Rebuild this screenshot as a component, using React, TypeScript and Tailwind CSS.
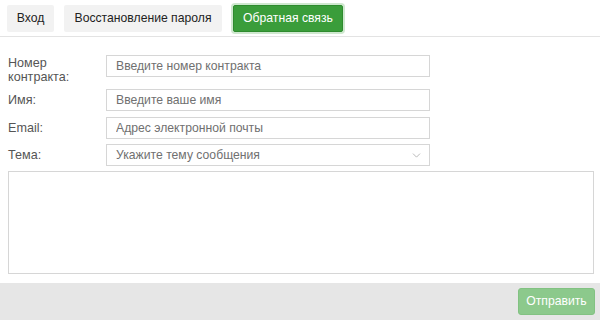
import { ChevronDown } from "lucide-react";

const font = { fontFamily: '"Liberation Sans", Arial, sans-serif' };

export default function App() {
  return (
    <div className="w-[600px] h-[320px] bg-white flex flex-col text-[12.2px] overflow-hidden" style={font}>
      {/* Tabs */}
      <div className="flex items-center h-[37px] pl-[7px] pt-[1px] border-b border-[#e3e3e3]">
        <button className="h-[27px] w-[47px] bg-[#f2f2f2] text-[#222] rounded-[2px]">Вход</button>
        <button className="ml-[10px] h-[27px] w-[158px] bg-[#f2f2f2] text-[#222] rounded-[2px]">
          Восстановление пароля
        </button>
        <button className="ml-[11px] h-[27px] w-[110px] bg-[#3a9d3a] text-white border border-[#2e8b2e] rounded-[2px] ring-2 ring-[#cfe8cf]">
          Обратная связь
        </button>
      </div>

      {/* Form */}
      <div className="flex flex-col pl-[8px] pr-[6px] pt-[18px]">
        <div className="flex">
          <label className="w-[98px] text-[#555] text-[12.6px] leading-[14px] pt-[1px]">
            Номер
            <br />
            контракта:
          </label>
          <input
            className="w-[324px] h-[22px] border border-[#d6d6d6] px-[9px] placeholder-[#707070] outline-none"
            placeholder="Введите номер контракта"
          />
        </div>
        <div className="flex items-center mt-[5px]">
          <label className="w-[98px] text-[#555] text-[12.6px]">Имя:</label>
          <input
            className="w-[324px] h-[22px] border border-[#d6d6d6] px-[9px] placeholder-[#707070] outline-none"
            placeholder="Введите ваше имя"
          />
        </div>
        <div className="flex items-center mt-[6px]">
          <label className="w-[98px] text-[#555] text-[12.6px]">Email:</label>
          <input
            className="w-[324px] h-[22px] border border-[#d6d6d6] px-[9px] placeholder-[#707070] outline-none"
            placeholder="Адрес электронной почты"
          />
        </div>
        <div className="flex items-center mt-[5px]">
          <label className="w-[98px] text-[#555] text-[12.6px]">Тема:</label>
          <div className="w-[324px] h-[22px] border border-[#d6d6d6] pl-[9px] pr-[6px] flex items-center justify-between text-[#707070]">
            <span>Укажите тему сообщения</span>
            <ChevronDown size={13} strokeWidth={1.5} className="text-[#aaa]" />
          </div>
        </div>
        <textarea className="mt-[5px] w-[586px] h-[103px] border border-[#d6d6d6] resize-none outline-none" />
      </div>

      {/* Footer */}
      <div className="mt-auto h-[37px] bg-[#e6e6e6] flex items-center justify-end pr-[5px]">
        <button className="h-[27px] w-[77px] bg-[#8cc98c] text-white rounded-[3px] border border-[#82c282]">Отправить</button>
      </div>
    </div>
  );
}
